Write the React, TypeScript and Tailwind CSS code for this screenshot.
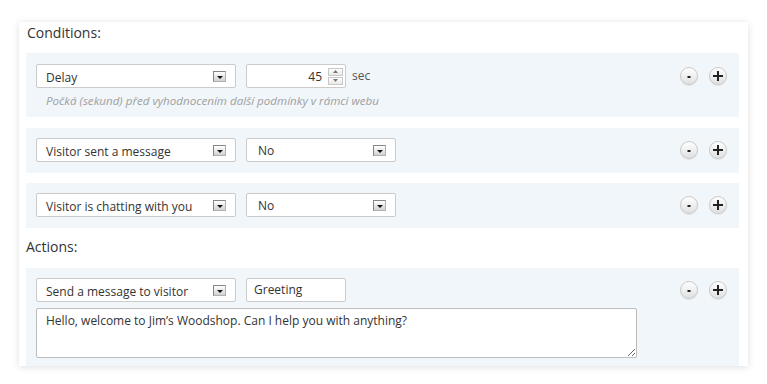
import type { ReactNode } from "react";

const font = { fontFamily: '"Open Sans", "Liberation Sans", sans-serif' };

function ArrowBox() {
  return (
    <span className="flex h-[11px] w-[13px] items-end justify-center border border-[#858585] border-r-[#b0b0b0] border-b-[#b0b0b0] bg-gradient-to-b from-[#ffffff] to-[#d2d2d2] pb-[2px]">
      <svg width="6" height="3" viewBox="0 0 6 3">
        <path d="M0 0h6L3 3z" fill="#111" />
      </svg>
    </span>
  );
}

function Select({ value, width, textClass = "pl-[9px] pt-[3px]" }: { value: string; width: string; textClass?: string }) {
  return (
    <div className={`flex h-[24px] ${width} items-center justify-between rounded-[2px] border border-[#cbcbcb] bg-white pr-[9px] text-[12px] text-[#333]`}>
      <span className={`leading-[16px] ${textClass}`}>{value}</span>
      <ArrowBox />
    </div>
  );
}

function Spinner() {
  return (
    <div className="flex flex-col gap-[1px]">
      {[0, 1].map(i => (
        <span key={i} className="flex h-[8px] w-[15px] items-center justify-center border border-[#c8c8c8] bg-gradient-to-b from-[#fdfdfd] to-[#e9e9e9]">
          <svg width="5" height="3" viewBox="0 0 5 3">
            <path d={i === 0 ? "M0 3h5L2.5 0z" : "M0 0h5L2.5 3z"} fill="#777" />
          </svg>
        </span>
      ))}
    </div>
  );
}

function RoundButtons() {
  const base = "flex h-[18px] w-[18px] items-center justify-center rounded-full border border-[#cacaca] bg-gradient-to-b from-[#ffffff] to-[#e0e0e0] shadow-[0_1px_1px_rgba(0,0,0,0.08)]";
  return (
    <div className="flex h-[24px] items-center gap-[11px]">
      <span className={base}>
        <svg width="10" height="10" viewBox="0 0 10 10">
          <rect x="3.5" y="5" width="3" height="2" fill="#222" />
        </svg>
      </span>
      <span className={base}>
        <svg width="10" height="10" viewBox="0 0 10 10">
          <rect x="0" y="4" width="10" height="2" fill="#222" />
          <rect x="4" y="0" width="2" height="10" fill="#222" />
        </svg>
      </span>
    </div>
  );
}

function Row({ children, className }: { children: ReactNode; className: string }) {
  return (
    <div className={`flex justify-between bg-[#f1f6fa] pl-[10px] pr-[12px] ${className}`}>
      <div>{children}</div>
      <RoundButtons />
    </div>
  );
}

export default function App() {
  return (
    <div className="min-h-[384px] bg-white pt-[22px]" style={font}>
      <div className="ml-[19px] h-[344px] w-[729px] overflow-hidden bg-white pl-[7px] pr-[9px] shadow-[0_1px_7px_rgba(0,0,0,0.13)]">
        <h2 className="mt-[1px] mb-[10px] pl-[1px] text-[14px] leading-[20px] text-[#333]">Conditions:</h2>

        <Row className="pt-[11px] pb-[8px]">
          <div className="flex items-center">
            <Select value="Delay" width="w-[200px]" />
            <div className="ml-[10px] flex h-[24px] w-[100px] items-center justify-end rounded-[2px] border border-[#cbcbcb] bg-white pr-[2px] text-[12px] text-[#333]">
              <span className="mr-[6px] pt-[1px] leading-[16px]">45</span>
              <Spinner />
            </div>
            <span className="ml-[6px] text-[12px] text-[#555]">sec</span>
          </div>
          <p className="mt-[5px] pl-[10px] text-[11.6px] leading-[16px] text-[#a0a0a0] italic">
            Počká (sekund) před vyhodnocením další podmínky v rámci webu
          </p>
        </Row>

        <Row className="mt-[11px] pt-[10px] pb-[11px]">
          <div className="flex items-center gap-[10px]">
            <Select value="Visitor sent a message" width="w-[200px]" />
            <Select value="No" width="w-[150px]" textClass="pl-[11px] pt-[1px]" />
          </div>
        </Row>

        <Row className="mt-[10px] pt-[10px] pb-[11px]">
          <div className="flex items-center gap-[10px]">
            <Select value="Visitor is chatting with you" width="w-[200px]" />
            <Select value="No" width="w-[150px]" textClass="pl-[11px] pt-[1px]" />
          </div>
        </Row>

        <h2 className="mt-[9px] mb-[11px] text-[14px] leading-[20px] text-[#333]">Actions:</h2>

        <Row className="pt-[10px] pb-[8px]">
          <div className="flex items-center gap-[10px]">
            <Select value="Send a message to visitor" width="w-[200px]" />
            <div className="flex h-[24px] w-[100px] items-center rounded-[2px] border border-[#cbcbcb] bg-white pl-[7px] text-[12px] text-[#333]">
              Greeting
            </div>
          </div>
          <textarea
            className="mt-[6px] block h-[50px] w-[601px] rounded-[2px] border border-[#bdbdbd] bg-white px-[9px] py-[4px] text-[12px] leading-[16px] text-[#333] outline-none"
            defaultValue="Hello, welcome to Jim’s Woodshop. Can I help you with anything?"
          />
        </Row>
      </div>
    </div>
  );
}
